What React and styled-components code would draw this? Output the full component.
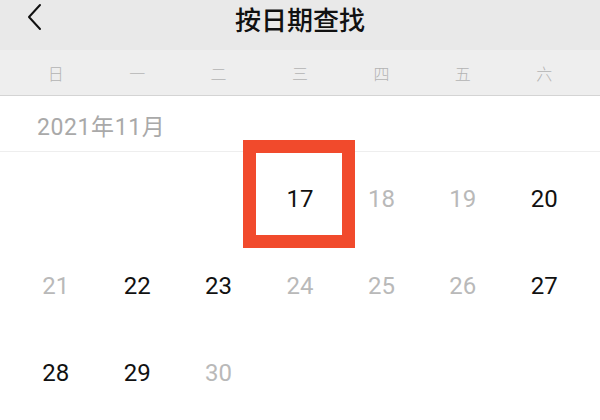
import React from 'react'
import styled, { createGlobalStyle } from 'styled-components'

const GlobalStyle = createGlobalStyle`
  html, body {
    margin: 0;
    padding: 0;
    background: #fff;
  }
  body {
    font-family: Roboto, "Noto Sans CJK SC", sans-serif;
  }
`

const Page = styled.div`
  width: 600px;
  height: 420px;
  overflow: hidden;
  background: #fff;
`

const Header = styled.div`
  height: 50px;
  box-sizing: border-box;
  background: #e9e9e9;
  display: flex;
  align-items: flex-start;
  justify-content: center;
  position: relative;
`

const BackButton = styled.div`
  position: absolute;
  left: 24px;
  top: 2px;
  width: 20px;
  height: 30px;
  display: flex;
  align-items: center;
  justify-content: center;
`

const Title = styled.div`
  font-family: "Noto Sans CJK SC", sans-serif;
  font-size: 26px;
  line-height: normal;
  font-weight: 500;
  color: #111;
`

const WeekRow = styled.div`
  height: 45px;
  background: #eeeeee;
  border-bottom: 1px solid #d4d4d4;
  display: grid;
  grid-template-columns: repeat(7, 1fr);
  padding: 0 15px;
  align-items: center;
`

const WeekDay = styled.div`
  text-align: center;
  font-family: "Noto Sans CJK SC", sans-serif;
  font-size: 16px;
  font-weight: 300;
  color: #b3b3b3;
`

const MonthBar = styled.div`
  height: 56px;
  border-bottom: 1px solid #eeeeee;
  display: flex;
  align-items: center;
  padding-left: 37px;
  font-size: 23px;
  letter-spacing: 0.6px;
  color: #a9a9a9;
  padding-top: 2px;
  box-sizing: border-box;
`

const Grid = styled.div`
  display: grid;
  grid-template-columns: repeat(7, 1fr);
  grid-auto-rows: 87px;
  padding: 0 15px;
`

const Cell = styled.div`
  position: relative;
  display: flex;
  align-items: center;
  justify-content: center;
  padding-top: 6px;
  box-sizing: border-box;
  font-size: 24px;
  color: ${({ $muted }) => ($muted ? '#b9b9b9' : '#111')};
`

const Highlight = styled.div`
  position: absolute;
  left: -16px;
  top: -12px;
  width: 112px;
  height: 108px;
  box-sizing: border-box;
  border: 13px solid #f14a2c;
  pointer-events: none;
`

const weekDays = ['日', '一', '二', '三', '四', '五', '六']

const days = [
  null, null, null,
  { n: 17, muted: false, active: true },
  { n: 18, muted: true },
  { n: 19, muted: true },
  { n: 20, muted: false },
  { n: 21, muted: true },
  { n: 22, muted: false },
  { n: 23, muted: false },
  { n: 24, muted: true },
  { n: 25, muted: true },
  { n: 26, muted: true },
  { n: 27, muted: false },
  { n: 28, muted: false },
  { n: 29, muted: false },
  { n: 30, muted: true },
]

export default function App() {
  return (
    <>
      <GlobalStyle />
      <Page>
        <Header>
          <BackButton>
            <svg width="16" height="28" viewBox="0 0 16 28" fill="none">
              <path d="M14 2 L3 14 L14 26" stroke="#111" strokeWidth="2" strokeLinecap="round" strokeLinejoin="round" />
            </svg>
          </BackButton>
          <Title>按日期查找</Title>
        </Header>
        <WeekRow>
          {weekDays.map((d) => (
            <WeekDay key={d}>{d}</WeekDay>
          ))}
        </WeekRow>
        <MonthBar>2021年11月</MonthBar>
        <Grid>
          {days.map((d, i) =>
            d ? (
              <Cell key={i} $muted={d.muted}>
                {d.n}
                {d.active && <Highlight />}
              </Cell>
            ) : (
              <Cell key={i} />
            )
          )}
        </Grid>
      </Page>
    </>
  )
}
